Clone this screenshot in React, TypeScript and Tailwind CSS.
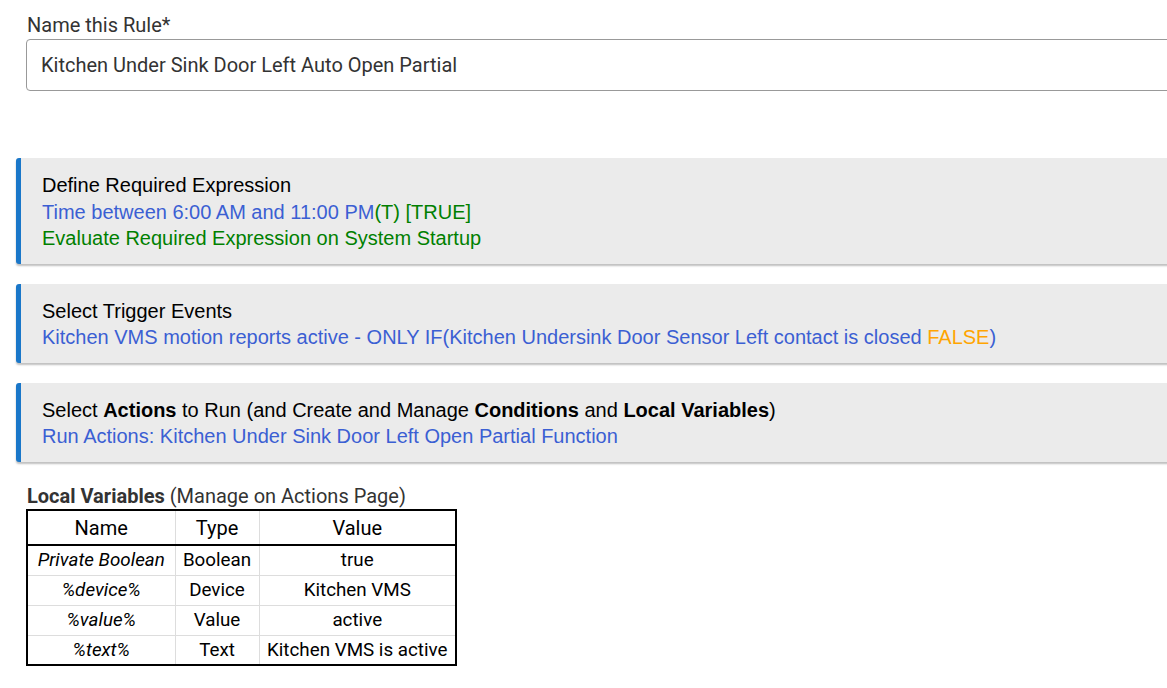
import React from "react";

const rows = [
  ["Private Boolean", "Boolean", "true"],
  ["%device%", "Device", "Kitchen VMS"],
  ["%value%", "Value", "active"],
  ["%text%", "Text", "Kitchen VMS is active"],
];

function Panel({ children }: { children: React.ReactNode }) {
  return (
    <div className="ml-[16px] mr-[-20px] border-l-[5px] border-[#1a77c9] bg-[#ebebeb] pl-[21px] pt-[14px] pb-[12.5px] rounded-l-[3px] shadow-[0_2px_2px_rgba(0,0,0,0.25)] text-[20px] leading-[26.5px] text-black [font-family:'Liberation_Sans',Arial,sans-serif]">
      {children}
    </div>
  );
}

export default function App() {
  return (
    <div className="w-[1167px] h-[688px] overflow-hidden bg-white [font-family:Roboto,sans-serif]">
      <div className="pt-[12px] pl-[27px] text-[20px] leading-[26px] text-[#333]">Name this Rule*</div>
      <div className="ml-[26px] mr-[-20px] mt-[1px] h-[52px] border border-[#999] rounded-[4px] flex items-center pl-[14px] text-[20px] text-[#333]">
        Kitchen Under Sink Door Left Auto Open Partial
      </div>
      <div className="mt-[67px] flex flex-col gap-[19.5px]">
        <Panel>
          <div>Define Required Expression</div>
          <div className="text-[#3b5fd3]">
            Time between 6:00 AM and 11:00 PM<span className="text-[#008000]">(T) [TRUE]</span>
          </div>
          <div className="text-[#008000]">Evaluate Required Expression on System Startup</div>
        </Panel>
        <Panel>
          <div>Select Trigger Events</div>
          <div className="text-[#3b5fd3]">
            Kitchen VMS motion reports active - ONLY IF(Kitchen Undersink Door Sensor Left contact is closed{" "}
            <span className="text-[#ffa500]">FALSE</span>)
          </div>
        </Panel>
        <Panel>
          <div>
            Select <b>Actions</b> to Run (and Create and Manage <b>Conditions</b> and <b>Local Variables</b>)
          </div>
          <div className="text-[#3b5fd3]">Run Actions: Kitchen Under Sink Door Left Open Partial Function</div>
        </Panel>
      </div>
      <div className="mt-[21px] pl-[27px] text-[20px] leading-[26px] text-[#333]">
        <b className="font-bold">Local Variables</b> (Manage on Actions Page)
      </div>
      <table className="ml-[26px] border-collapse border-2 border-black text-black text-center">
        <thead>
          <tr className="border-b-2 border-black h-[35px] text-[20px]">
            <th className="font-normal w-[148px] border-r border-[#ddd]">Name</th>
            <th className="font-normal w-[84px] border-r border-[#ddd]">Type</th>
            <th className="font-normal w-[197px]">Value</th>
          </tr>
        </thead>
        <tbody className="text-[18.8px]">
          {rows.map((r, i) => (
            <tr key={i} className={`h-[30px] ${i < rows.length - 1 ? "border-b border-[#ddd]" : ""}`}>
              <td className="italic border-r border-[#ddd] px-[2px] whitespace-nowrap">{r[0]}</td>
              <td className="border-r border-[#ddd] px-[2px]">{r[1]}</td>
              <td className="px-[2px] whitespace-nowrap">{r[2]}</td>
            </tr>
          ))}
        </tbody>
      </table>
    </div>
  );
}
